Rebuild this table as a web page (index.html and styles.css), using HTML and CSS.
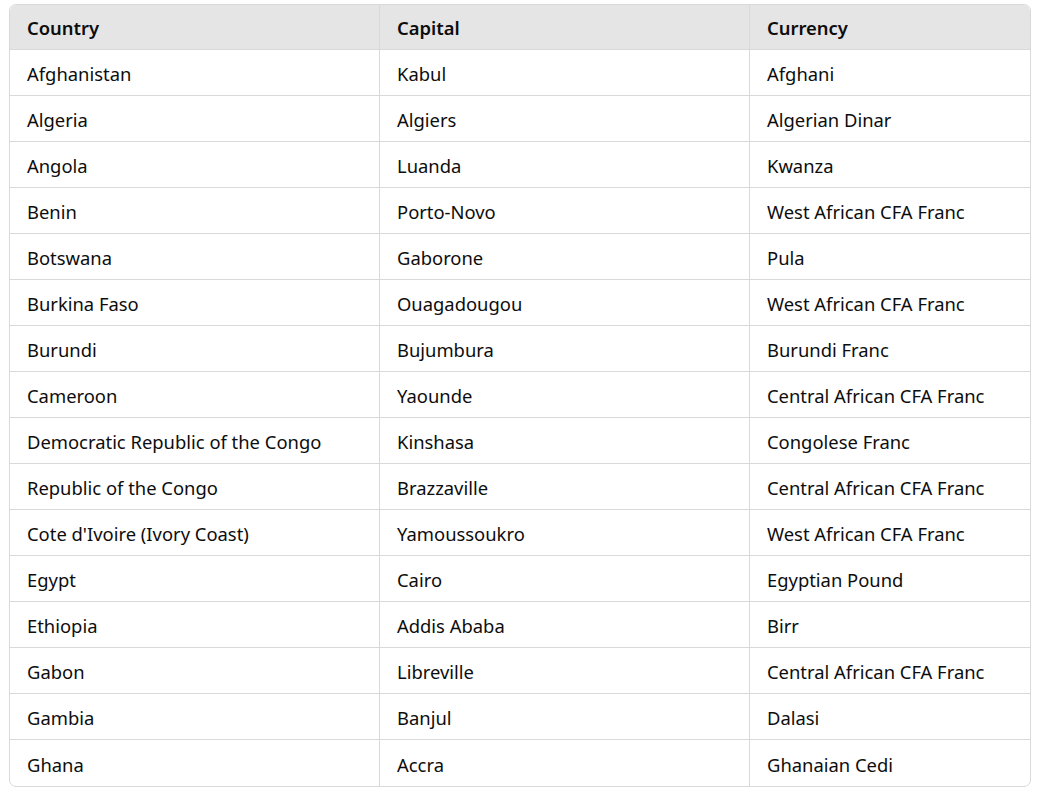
FILE: index.html
```html
<!DOCTYPE html>
<html>
<head>
<meta charset="utf-8">
<link rel="stylesheet" href="styles.css">
</head>
<body>
<div class="wrap">
<table class="tbl">
<colgroup><col class="c1"><col class="c2"><col class="c3"></colgroup>
<thead>
<tr><th>Country</th><th>Capital</th><th>Currency</th></tr>
</thead>
<tbody>
<tr><td>Afghanistan</td><td>Kabul</td><td>Afghani</td></tr>
<tr><td>Algeria</td><td>Algiers</td><td>Algerian Dinar</td></tr>
<tr><td>Angola</td><td>Luanda</td><td>Kwanza</td></tr>
<tr><td>Benin</td><td>Porto-Novo</td><td>West African CFA Franc</td></tr>
<tr><td>Botswana</td><td>Gaborone</td><td>Pula</td></tr>
<tr><td>Burkina Faso</td><td>Ouagadougou</td><td>West African CFA Franc</td></tr>
<tr><td>Burundi</td><td>Bujumbura</td><td>Burundi Franc</td></tr>
<tr><td>Cameroon</td><td>Yaounde</td><td>Central African CFA Franc</td></tr>
<tr><td>Democratic Republic of the Congo</td><td>Kinshasa</td><td>Congolese Franc</td></tr>
<tr><td>Republic of the Congo</td><td>Brazzaville</td><td>Central African CFA Franc</td></tr>
<tr><td>Cote d'Ivoire (Ivory Coast)</td><td>Yamoussoukro</td><td>West African CFA Franc</td></tr>
<tr><td>Egypt</td><td>Cairo</td><td>Egyptian Pound</td></tr>
<tr><td>Ethiopia</td><td>Addis Ababa</td><td>Birr</td></tr>
<tr><td>Gabon</td><td>Libreville</td><td>Central African CFA Franc</td></tr>
<tr><td>Gambia</td><td>Banjul</td><td>Dalasi</td></tr>
<tr><td>Ghana</td><td>Accra</td><td>Ghanaian Cedi</td></tr>
</tbody>
</table>
</div>
</body>
</html>
```

FILE: styles.css
```css
html, body {
  margin: 0;
  padding: 0;
  background: #ffffff;
}
body {
  font-family: "Noto Sans", "Open Sans", sans-serif;
  font-size: 18.4px;
  color: #0d0d0d;
}
.wrap {
  margin: 4px 0 0 9px;
  width: 1022px;
  box-sizing: border-box;
  border: 1px solid #d9d9d9;
  border-radius: 7px;
  overflow: hidden;
}
.tbl {
  width: 1020px;
  border-collapse: separate;
  border-spacing: 0;
  table-layout: fixed;
}
.c1 { width: 370px; }
.c2 { width: 370px; }
.c3 { width: 280px; }
.tbl th, .tbl td {
  text-align: left;
  padding: 2px 0 0 17px;
  border-right: 1px solid #d9d9d9;
  border-bottom: 1px solid #d9d9d9;
  white-space: nowrap;
  box-sizing: border-box;
  line-height: 24px;
}
.tbl th:last-child, .tbl td:last-child { border-right: none; }
.tbl tbody tr:last-child td { border-bottom: none; }
.tbl th {
  background: #e5e5e5;
  font-weight: 600;
  height: 45px;
}
.tbl td {
  height: 46px;
  padding-top: 3px;
}
```
